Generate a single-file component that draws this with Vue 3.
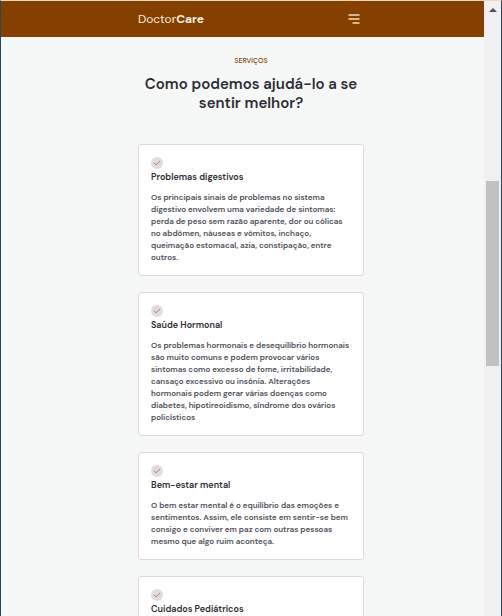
<script setup>
const services = [
  {
    title: 'Problemas digestivos',
    text: `Os principais sinais de problemas no sistema
digestivo envolvem uma variedade de sintomas:
perda de peso sem razão aparente, dor ou cólicas
no abdômen, náuseas e vômitos, inchaço,
queimação estomacal, azia, constipação, entre
outros.`,
  },
  {
    title: 'Saúde Hormonal',
    text: `Os problemas hormonais e desequilíbrio hormonais
são muito comuns e podem provocar vários
sintomas como excesso de fome, irritabilidade,
cansaço excessivo ou insônia. Alterações
hormonais podem gerar várias doenças como
diabetes, hipotireoidismo, síndrome dos ovários
policísticos`,
  },
  {
    title: 'Bem-estar mental',
    text: `O bem estar mental é o equilíbrio das emoções e
sentimentos. Assim, ele consiste em sentir-se bem
consigo e conviver em paz com outras pessoas
mesmo que algo ruim aconteça.`,
  },
  { title: 'Cuidados Pediátricos', text: '' },
]
</script>

<template>
  <div class="window">
    <header class="topbar">
      <div class="container bar">
        <a href="#home" class="logo">Doctor<strong>Care</strong></a>
        <button type="button" class="menu" aria-label="Abrir menu">
          <svg width="12" height="12" viewBox="0 0 12 12" fill="none" stroke="#d2b48e" stroke-width="2" stroke-linecap="butt">
            <path d="M0.5 2H11.5M0.5 6H11.5M4.5 10H11.5" />
          </svg>
        </button>
      </div>
    </header>

    <main id="services" class="container">
      <div class="heading">
        <p class="eyebrow">SERVIÇOS</p>
        <h1>Como podemos ajudá-lo a se<br>sentir melhor?</h1>
      </div>
      <div class="cards">
        <article v-for="service in services" :key="service.title" class="card">
          <svg class="check" width="12" height="12" viewBox="0 0 12 12" fill="none">
            <circle cx="6" cy="6" r="6" fill="#e3dcdb" />
            <path d="M3.2 6L5.2 7.8L8.8 4.2" stroke="#7b8581" stroke-width="0.9" stroke-linecap="round" stroke-linejoin="round" />
          </svg>
          <h2>{{ service.title }}</h2>
          <p>{{ service.text }}</p>
        </article>
      </div>
    </main>

    <div class="scrollbar" aria-hidden="true">
      <svg class="arrow" width="8" height="4" viewBox="0 0 8 4"><path d="M4 0L8 4H0Z" fill="#505050" /></svg>
      <div class="track"><div class="thumb"></div></div>
    </div>
  </div>
</template>

<style>
body {
  margin: 0;
  overflow: hidden;
}
</style>

<style scoped>
.window {
  position: relative;
  box-sizing: border-box;
  height: 100vh;
  overflow: hidden;
  border: 1px solid #204a60;
  border-top-color: #ecd9c4;
  border-bottom: 0;
  background: #f5f8f7;
  font-family: "DM Sans", Inter, "Liberation Sans", sans-serif;
}
.container {
  width: 100%;
  max-width: 226px;
  margin: 0 auto;
}
.topbar {
  background: #854000;
}
.bar {
  display: flex;
  align-items: center;
  justify-content: space-between;
  height: 36px;
}
.logo {
  color: #fbeee0;
  font-size: 12px;
  font-variation-settings: "opsz" 9;
  line-height: 16px;
  text-decoration: none;
}
.logo strong {
  font-weight: 700;
}
.menu {
  display: flex;
  padding: 0;
  margin-right: 4px;
  border: 0;
  background: none;
}
.heading {
  padding: 18px 0 31px;
  text-align: center;
}
.eyebrow {
  margin: 0 0 9px;
  color: #854000;
  font-size: 7px;
  font-weight: 500;
  line-height: 11px;
}
h1 {
  margin: 0;
  color: #2e2d33;
  font-size: 15px;
  font-weight: 600;
  line-height: 19px;
  white-space: nowrap;
}
.cards {
  display: flex;
  flex-direction: column;
  gap: 16px;
}
.card {
  padding: 12px;
  border: 1px solid #e4dada;
  border-radius: 3px;
  background: #fff;
}
.check {
  display: block;
}
h2 {
  margin: 0 0 6px;
  color: #2e2d33;
  font-size: 9px;
  font-weight: 600;
  line-height: 16px;
}
.card p {
  margin: 0;
  color: #4c4f56;
  font-size: 8px;
  font-weight: 600;
  line-height: 12px;
  white-space: pre;
}
.scrollbar {
  position: absolute;
  top: 0;
  right: 0;
  bottom: 0;
  display: flex;
  flex-direction: column;
  align-items: center;
  width: 17px;
  background: #f0f0f0;
}
.arrow {
  margin: 7px 0;
}
.track {
  flex: 1;
  width: 13px;
}
.thumb {
  height: 31%;
  margin-top: 162px;
  background: #c1c1c1;
}
</style>
